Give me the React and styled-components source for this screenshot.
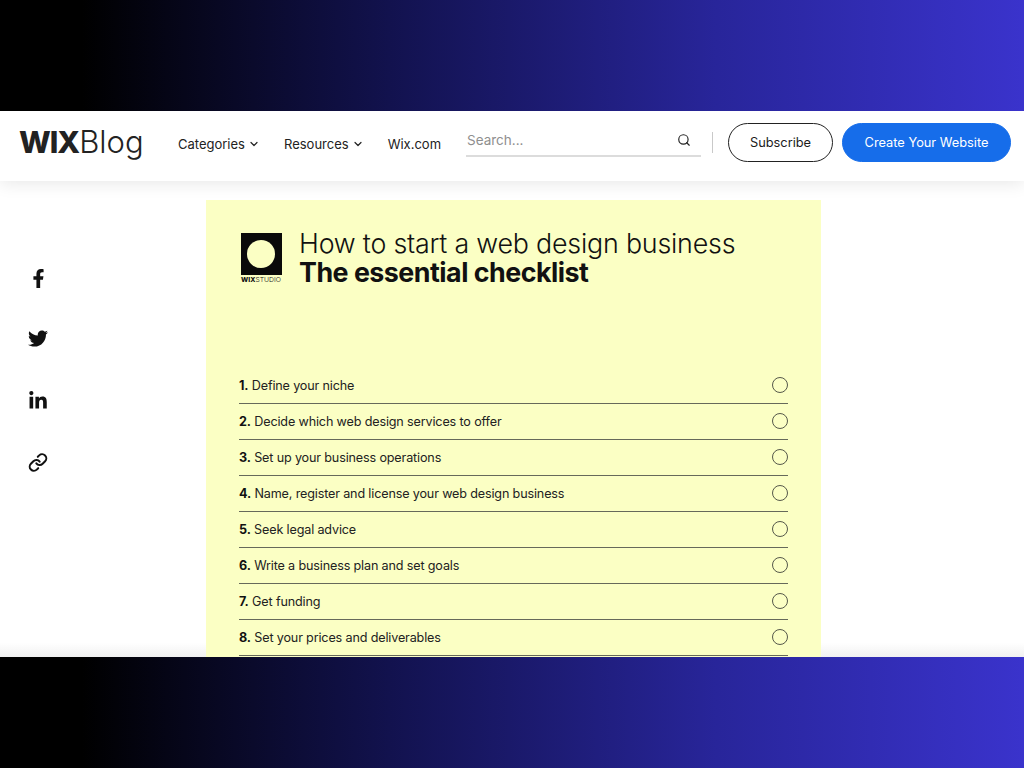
import React from 'react';
import styled, { createGlobalStyle } from 'styled-components';
import { FaFacebookF, FaTwitter, FaLinkedinIn } from 'react-icons/fa';
import { ChevronDown, Search, Link } from 'lucide-react';

// CSS //
const Global = createGlobalStyle`
    html, body { margin: 0; padding: 0; background: #fff; }
    * { box-sizing: border-box; }
    body { font-family: Inter, "Open Sans", sans-serif; color: #1c1c1c; }
`;

const Page = styled.div`
    width: 1024px;
    height: 768px;
    display: flex;
    flex-direction: column;
    overflow: hidden;
`;

const Band = styled.div`
    flex: 0 0 ${({ $h }) => $h}px;
    background: linear-gradient(90deg, #000 0%, #000 8%, #12124e 38%, #28259a 70%, #3a33cc 100%);
    position: relative;
    z-index: 3;
`;

const Header = styled.header`
    flex: 0 0 70px;
    display: flex;
    align-items: center;
    padding: 0 13px 0 19px;
    background: #fff;
    box-shadow: 0 3px 16px rgba(0, 0, 0, 0.09);
    position: relative;
    z-index: 2;
`;

const Logo = styled.div`
    width: 159px;
    font-size: 31px;
    line-height: 36px;
    color: #222;
    margin-top: -8px;
    white-space: nowrap;

    b { font-size: 30px; font-weight: 800; letter-spacing: -1px; }
    span { font-weight: 300; }
`;

const Nav = styled.nav`
    width: 288px;
    margin-top: -5px;
    display: flex;
    align-items: center;
    gap: 24px;
    font-size: 13px;
    color: #222;
`;

const NavItem = styled.a`
    display: flex;
    align-items: center;
    gap: 3px;
    white-space: nowrap;
`;

const SearchBox = styled.div`
    width: 235px;
    height: 30px;
    margin-top: -8px;
    display: flex;
    align-items: center;
    justify-content: space-between;
    padding: 0 10px 3px 1px;
    border-bottom: 2px solid #dcdcdc;
    color: #8f8f8f;
    font-size: 13.5px;

    svg { color: #222; }
`;

const Divider = styled.div`
    width: 1px;
    height: 21px;
    margin: -7px 15px 0 11px;
    background: #c9c9c9;
`;

const Pill = styled.button`
    height: 39px;
    padding: 0;
    width: ${({ $w }) => $w}px;
    margin: -8px ${({ $mr }) => $mr || 0}px 0 0;
    border-radius: 20px;
    border: 1px solid ${({ $primary }) => ($primary ? '#166dea' : '#222')};
    background: ${({ $primary }) => ($primary ? '#166dea' : '#fff')};
    color: ${({ $primary }) => ($primary ? '#fff' : '#1c1c1c')};
    font-family: inherit;
    font-size: 12.8px;
`;

const Main = styled.main`
    flex: 1;
    display: flex;
    min-height: 0;
    overflow: hidden;
    background: linear-gradient(180deg, #fff 97%, #f1f1f1 100%);
`;

const Share = styled.aside`
    flex: 0 0 206px;
    padding: 87px 0 0 28px;
    display: flex;
    flex-direction: column;
    align-items: flex-start;
`;

const ShareIcon = styled.div`
    width: 20px;
    height: 20px;
    margin-bottom: ${({ $gap }) => $gap}px;
    display: flex;
    align-items: center;
    justify-content: center;
    color: #111;
`;

const Card = styled.section`
    width: 615px;
    height: 480px;
    margin-top: 19px;
    padding: 31px 33px 0;
    background: #fbffc4;
    color: #111;
`;

const Title = styled.div`
    display: flex;
    gap: 17px;
    height: 137px;
`;

const Mark = styled.div`
    width: 42px;
    padding-top: 2px;
    display: flex;
    flex-direction: column;
    align-items: center;
    margin-left: 1px;
`;

const MarkSquare = styled.div`
    width: 41px;
    height: 42px;
    background: #0a0a0a;
    display: flex;
    align-items: center;
    justify-content: center;

    &::after {
        content: '';
        width: 28px;
        height: 28px;
        border-radius: 50%;
        background: #fbffc4;
    }
`;

const MarkText = styled.div`
    margin-top: 1px;
    font-size: 6.8px;
    line-height: 8px;
    white-space: nowrap;

    b { font-weight: 800; }
    span { font-weight: 300; }
`;

const Heading = styled.h1`
    margin: -2px 0 0;
    font-size: 26.8px;
    line-height: 28.5px;
    font-weight: 300;
    letter-spacing: -0.2px;
    white-space: nowrap;

    strong { display: block; font-weight: 700; letter-spacing: -0.5px; }
`;

const List = styled.ol`
    list-style: none;
    margin: 0;
    padding: 0;
`;

const Row = styled.li`
    height: 36.05px;
    display: flex;
    align-items: center;
    justify-content: space-between;
    border-bottom: 1px solid #66695a;
    font-size: 12.6px;
    font-weight: 400;
    letter-spacing: -0.15px;
    color: #222;

    b { font-weight: 700; color: #111; }
`;

const Circle = styled.span`
    width: 16px;
    height: 16px;
    margin-bottom: 1px;
    border-radius: 50%;
    border: 1px solid #55584a;
`;

const items = [
    'Define your niche',
    'Decide which web design services to offer',
    'Set up your business operations',
    'Name, register and license your web design business',
    'Seek legal advice',
    'Write a business plan and set goals',
    'Get funding',
    'Set your prices and deliverables',
];

// COMPONENT //
const App = () => (
    <Page>
        <Global />
        <Band $h={111} />
        <Header>
            <Logo><b>WIX</b><span>Blog</span></Logo>
            <Nav>
                <NavItem>Categories <ChevronDown size={12} strokeWidth={2.4} /></NavItem>
                <NavItem>Resources <ChevronDown size={12} strokeWidth={2.4} /></NavItem>
                <NavItem>Wix.com</NavItem>
            </Nav>
            <SearchBox>
                Search...
                <Search size={14} />
            </SearchBox>
            <Divider />
            <Pill $w={105} $mr={9}>Subscribe</Pill>
            <Pill $w={169} $primary>Create Your Website</Pill>
        </Header>
        <Main>
            <Share>
                <ShareIcon $gap={40}><FaFacebookF size={19} /></ShareIcon>
                <ShareIcon $gap={43}><FaTwitter size={21} /></ShareIcon>
                <ShareIcon $gap={41}><FaLinkedinIn size={20} /></ShareIcon>
                <ShareIcon $gap={0}><Link size={21} strokeWidth={2.4} /></ShareIcon>
            </Share>
            <Card>
                <Title>
                    <Mark>
                        <MarkSquare />
                        <MarkText><b>WIX</b><span>STUDIO</span></MarkText>
                    </Mark>
                    <Heading>
                        How to start a web design business
                        <strong>The essential checklist</strong>
                    </Heading>
                </Title>
                <List>
                    {items.map((text, i) => (
                        <Row key={text}>
                            <span><b>{i + 1}.</b> {text}</span>
                            <Circle />
                        </Row>
                    ))}
                </List>
            </Card>
        </Main>
        <Band $h={111} />
    </Page>
);

export default App;
